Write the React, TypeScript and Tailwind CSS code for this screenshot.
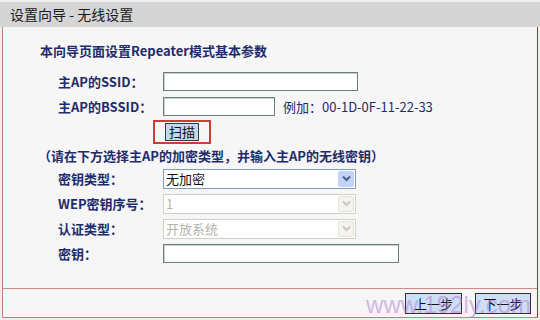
const FONT = "font-['Noto_Sans_CJK_SC','Noto_Sans',sans-serif]";

function Label({ children }: { children: React.ReactNode }) {
  return (
    <div className="w-[105px] shrink-0 text-[13px] font-semibold leading-none text-[#1f2b6a]">
      {children}
    </div>
  );
}

function TextBox({ width }: { width: string }) {
  return <div className={`${width} h-[19px] border border-[#6d7f77] bg-white shadow-[inset_1px_1px_0_#c9d1cc]`} />;
}

function Select({ value, disabled }: { value: string; disabled?: boolean }) {
  return (
    <div
      className={`flex h-[20px] w-[193px] items-center border bg-white pl-[2px] ${
        disabled ? "border-[#d2d0c4] bg-[#fbfbf8]" : "border-[#7f9db9]"
      }`}
    >
      <span className={`flex-1 text-[13px] leading-none ${disabled ? "text-[#b4b4ae]" : "text-[#111]"}`}>{value}</span>
      <div
        className={`m-[1px] flex h-[16px] w-[16px] items-center justify-center rounded-[2px] ${
          disabled ? "border border-[#e4e2d8] bg-[#f4f3ee]" : "bg-[#c3d3f7]"
        }`}
      >
        <svg width="9" height="7" viewBox="0 0 9 7">
          <path d="M1 1.5 L4.5 5 L8 1.5" fill="none" stroke={disabled ? "#c9c8c0" : "#4d6185"} strokeWidth="2" />
        </svg>
      </div>
    </div>
  );
}

export default function App() {
  return (
    <div className={`relative h-[320px] w-[540px] overflow-hidden bg-[#efefef] pt-[2px] ${FONT}`}>
      <div className="flex h-[25px] items-center bg-[#d5d5d5] pl-[10px] text-[14px] text-[#1a1a1a]">
        设置向导 - 无线设置
      </div>

      <div className="mx-[2px] flex h-[291px] flex-col border-x border-b border-x-[#c87c7c] border-b-[#c87c7c] border-r-[#8a3a3a] bg-[#f6f6f6]">
        <div className="flex h-[262px] flex-col border-b border-[#d48a8a]">
          <div className="flex h-[30px] items-end pl-[37px] text-[13px] font-semibold leading-none text-[#1f2b6a]">
            本向导页面设置Repeater模式基本参数
          </div>
          <div className="h-[12px]" />

          <div className="flex flex-col pl-[55px]">
            <div className="flex h-[25px] items-center">
              <Label>主AP的SSID：</Label>
              <TextBox width="w-[195px]" />
            </div>
            <div className="flex h-[25px] items-center">
              <Label>主AP的BSSID：</Label>
              <TextBox width="w-[112px]" />
              <span className="ml-[8px] text-[13px] leading-none text-[#1f2b6a]">例加：00-1D-0F-11-22-33</span>
            </div>
            <div className="flex h-[25px] items-center pl-[95px]">
              <div className="flex h-[24px] w-[58px] items-center justify-center border-2 border-[#d23a3a]">
                <div className="flex h-[18px] w-[34px] items-center justify-center border border-[#3a3a3a] bg-[#c3d8ea] text-[13px] leading-none text-[#111]">
                  扫描
                </div>
              </div>
            </div>
          </div>

          <div className="flex h-[22px] items-center pl-[35px] text-[13px] font-semibold leading-none text-[#1f2b6a]">
            （请在下方选择主AP的加密类型，并输入主AP的无线密钥）
          </div>

          <div className="flex flex-col pl-[55px]">
            <div className="flex h-[25px] items-center">
              <Label>密钥类型：</Label>
              <Select value="无加密" />
            </div>
            <div className="flex h-[25px] items-center">
              <Label>WEP密钥序号：</Label>
              <Select value="1" disabled />
            </div>
            <div className="flex h-[25px] items-center">
              <Label>认证类型：</Label>
              <Select value="开放系统" disabled />
            </div>
            <div className="flex h-[25px] items-center">
              <Label>密钥：</Label>
              <TextBox width="w-[236px]" />
            </div>
          </div>
        </div>

        <div className="relative flex flex-1 items-center justify-end gap-[13px] pr-[6px]">
          <button className="h-[21px] w-[57px] border border-[#2f2f2f] bg-[#cddff6] text-[13px] leading-none text-[#111]">
            上一步
          </button>
          <button className="h-[21px] w-[56px] border border-[#2f2f2f] bg-[#cddff6] text-[13px] leading-none text-[#111]">
            下一步
          </button>
          <span className="pointer-events-none absolute bottom-0 right-[6px] font-['Liberation_Sans',sans-serif] text-[24px] leading-none text-[#b27ad0] opacity-50">
            www.192ly.com
          </span>
        </div>
      </div>
    </div>
  );
}
